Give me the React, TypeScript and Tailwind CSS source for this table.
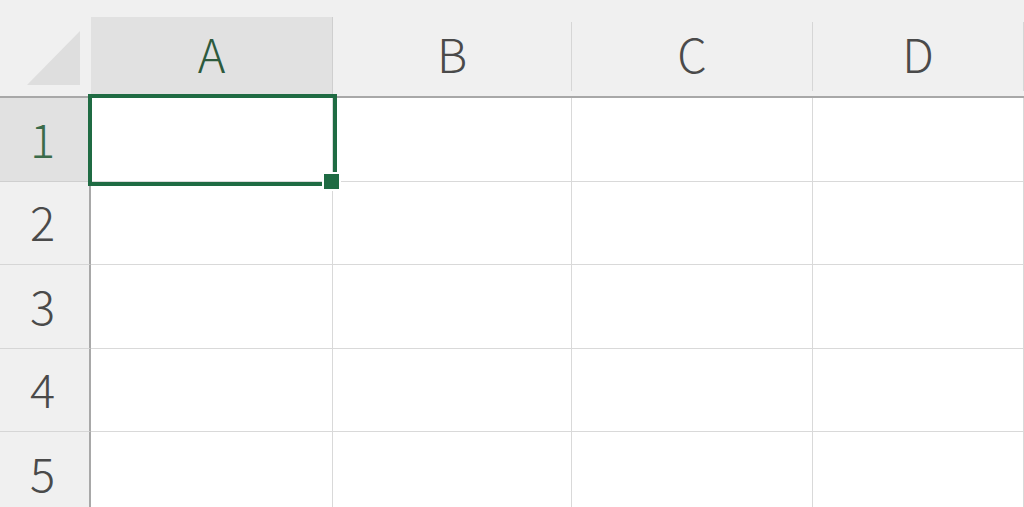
const cols = [
  { key: "A", width: "w-[242px]" },
  { key: "B", width: "w-[239px]" },
  { key: "C", width: "w-[241px]" },
  { key: "D", width: "flex-1" },
];

const rows = [1, 2, 3, 4, 5];

export default function App() {
  return (
    <div
      className="relative w-[1024px] h-[507px] overflow-hidden bg-white text-[#4a4a4a] select-none"
      style={{ fontFamily: '"Noto Sans CJK JP", "Noto Sans", sans-serif' }}
    >
      {/* Column headers */}
      <div className="flex h-[98px] bg-[#f0f0f0] border-b-2 border-[#a8a8a8]">
        <div className="w-[91px] shrink-0 flex pl-[27px] pt-[31px]">
          <svg width="54" height="54" viewBox="0 0 54 54">
            <polygon points="53,0 53,54 0,54" fill="#dedede" />
          </svg>
        </div>
        {cols.map((c, i) => (
          <div key={c.key} className={`${c.width} shrink-0 flex flex-col`}>
            <div className="h-[17px]" />
            <div
              className={
                i === 0
                  ? "flex-1 flex items-center justify-center bg-[#e1e1e1] border-r border-[#cfcfcf] text-[#2d5a3d]"
                  : "flex-1 flex items-center justify-center border-r border-[#d6d6d6] mt-[10px] -translate-y-[5px]"
              }
            >
              <span className="text-[47px] font-light leading-none -mt-[8px]">
                {c.key}
              </span>
            </div>
          </div>
        ))}
      </div>

      {/* Rows */}
      {rows.map((r) => (
        <div key={r} className="flex h-[83.5px]">
          <div
            className={
              r === 1
                ? "w-[91px] shrink-0 flex items-center justify-center bg-[#e1e1e1] border-r-2 border-[#a8a8a8] border-b border-b-[#cfcfcf] text-[#3b6b4a]"
                : "w-[91px] shrink-0 flex items-center justify-center bg-[#f0f0f0] border-r-2 border-[#a8a8a8] border-b border-b-[#d6d6d6]"
            }
          >
            <span className="text-[47px] font-light leading-none -ml-[4px] -mt-[4px]">{r}</span>
          </div>
          {cols.map((c) => (
            <div
              key={c.key}
              className={`${c.width} shrink-0 border-r border-b border-[#d9d9d9]`}
            />
          ))}
        </div>
      ))}

      {/* Active cell */}
      <div className="absolute left-[88px] top-[94px] w-[249px] h-[92px] border-4 border-[#1f6b43]" />
      <div className="absolute left-[322px] top-[172px] w-[19px] h-[19px] bg-[#1f6b43] border-2 border-white" />
    </div>
  );
}
